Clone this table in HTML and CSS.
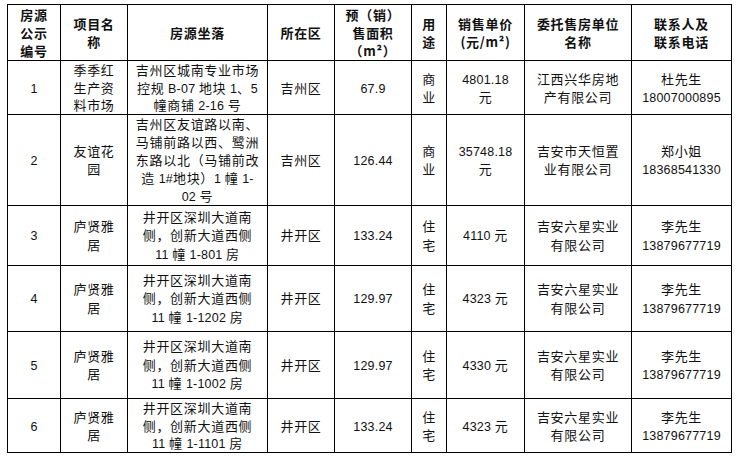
FILE: index.html
```html
<!DOCTYPE html>
<html lang="zh-CN">
<head>
<meta charset="utf-8">
<title>房源公示</title>
<link rel="stylesheet" href="styles.css">
</head>
<body>
<table class="sheet">
  <colgroup>
    <col class="c1"><col class="c2"><col class="c3"><col class="c4"><col class="c5"><col class="c6"><col class="c7"><col class="c8"><col class="c9">
  </colgroup>
  <thead>
    <tr class="r-head">
      <th>房源<br>公示<br>编号</th>
      <th>项目名<br>称</th>
      <th>房源坐落</th>
      <th>所在区</th>
      <th>预（销）<br>售面积<br>（m²）</th>
      <th>用<br>途</th>
      <th>销售单价<br>(元/m²)</th>
      <th>委托售房单位<br>名称</th>
      <th>联系人及<br>联系电话</th>
    </tr>
  </thead>
  <tbody>
    <tr class="r1">
      <td><span class="num">1</span></td>
      <td>季季红<br>生产资<br>料市场</td>
      <td>吉州区城南专业市场<br>控规 <span class="num">B-07</span> 地块 <span class="num">1</span>、<span class="num">5</span><br>幢商铺 <span class="num">2-16</span> 号</td>
      <td>吉州区</td>
      <td><span class="num">67.9</span></td>
      <td>商<br>业</td>
      <td><span class="num">4801.18</span><br>元</td>
      <td>江西兴华房地<br>产有限公司</td>
      <td>杜先生<br><span class="num">18007000895</span></td>
    </tr>
    <tr class="r2">
      <td><span class="num">2</span></td>
      <td>友谊花<br>园</td>
      <td>吉州区友谊路以南、<br>马铺前路以西、鹭洲<br>东路以北（马铺前改<br>造 <span class="num">1#</span>地块）<span class="num">1</span> 幢 <span class="num">1-</span><br><span class="num">02</span> 号</td>
      <td>吉州区</td>
      <td><span class="num">126.44</span></td>
      <td>商<br>业</td>
      <td><span class="num">35748.18</span><br>元</td>
      <td>吉安市天恒置<br>业有限公司</td>
      <td>郑小姐<br><span class="num">18368541330</span></td>
    </tr>
    <tr class="r3">
      <td><span class="num">3</span></td>
      <td>庐贤雅<br>居</td>
      <td>井开区深圳大道南<br>侧，创新大道西侧<br><span class="num">11</span> 幢 <span class="num">1-801</span> 房</td>
      <td>井开区</td>
      <td><span class="num">133.24</span></td>
      <td>住<br>宅</td>
      <td><span class="num">4110</span> 元</td>
      <td>吉安六星实业<br>有限公司</td>
      <td>李先生<br><span class="num">13879677719</span></td>
    </tr>
    <tr class="r4">
      <td><span class="num">4</span></td>
      <td>庐贤雅<br>居</td>
      <td>井开区深圳大道南<br>侧，创新大道西侧<br><span class="num">11</span> 幢 <span class="num">1-1202</span> 房</td>
      <td>井开区</td>
      <td><span class="num">129.97</span></td>
      <td>住<br>宅</td>
      <td><span class="num">4323</span> 元</td>
      <td>吉安六星实业<br>有限公司</td>
      <td>李先生<br><span class="num">13879677719</span></td>
    </tr>
    <tr class="r5">
      <td><span class="num">5</span></td>
      <td>庐贤雅<br>居</td>
      <td>井开区深圳大道南<br>侧，创新大道西侧<br><span class="num">11</span> 幢 <span class="num">1-1002</span> 房</td>
      <td>井开区</td>
      <td><span class="num">129.97</span></td>
      <td>住<br>宅</td>
      <td><span class="num">4330</span> 元</td>
      <td>吉安六星实业<br>有限公司</td>
      <td>李先生<br><span class="num">13879677719</span></td>
    </tr>
    <tr class="r6">
      <td><span class="num">6</span></td>
      <td>庐贤雅<br>居</td>
      <td>井开区深圳大道南<br>侧，创新大道西侧<br><span class="num">11</span> 幢 <span class="num">1-1101</span> 房</td>
      <td>井开区</td>
      <td><span class="num">133.24</span></td>
      <td>住<br>宅</td>
      <td><span class="num">4323</span> 元</td>
      <td>吉安六星实业<br>有限公司</td>
      <td>李先生<br><span class="num">13879677719</span></td>
    </tr>
  </tbody>
</table>
</body>
</html>
```
FILE: styles.css
```css
html, body {
  margin: 0;
  padding: 0;
  background: #ffffff;
}

.sheet {
  margin: 4px 0 0 7px;
  border-collapse: separate;
  border-spacing: 0;
  table-layout: fixed;
  width: 725px;
  border-left: 1px solid #000;
  border-top: 1px solid #000;
  font-family: "Noto Sans CJK SC", "Noto Sans", sans-serif;
  font-size: 13px;
  letter-spacing: 0.7px;
  color: #111;
}

.c1 { width: 53px; }
.c2 { width: 67px; }
.c3 { width: 140px; }
.c4 { width: 67px; }
.c5 { width: 77px; }
.c6 { width: 35px; }
.c7 { width: 78px; }
.c8 { width: 107px; }
.c9 { width: 100px; }

.sheet th,
.sheet td {
  border-right: 1px solid #000;
  border-bottom: 1px solid #000;
  padding: 0;
  text-align: center;
  vertical-align: middle;
  line-height: 18.5px;
  white-space: nowrap;
  overflow: hidden;
}

.sheet th {
  font-weight: 700;
  line-height: 18px;
}

.r1 td,
.r6 td { line-height: 17.5px; }
.r2 td { line-height: 18px; }

.r-head { height: 56px; }
.r1 { height: 54px; }
.r2 { height: 91px; }
.r3 { height: 60px; }
.r4 { height: 66px; }
.r5 { height: 67px; }
.r6 { height: 54px; }

.num {
  font-family: "Liberation Sans", Arial, sans-serif;
  font-size: 12.5px;
  line-height: 1;
  letter-spacing: 0.2px;
}
```
